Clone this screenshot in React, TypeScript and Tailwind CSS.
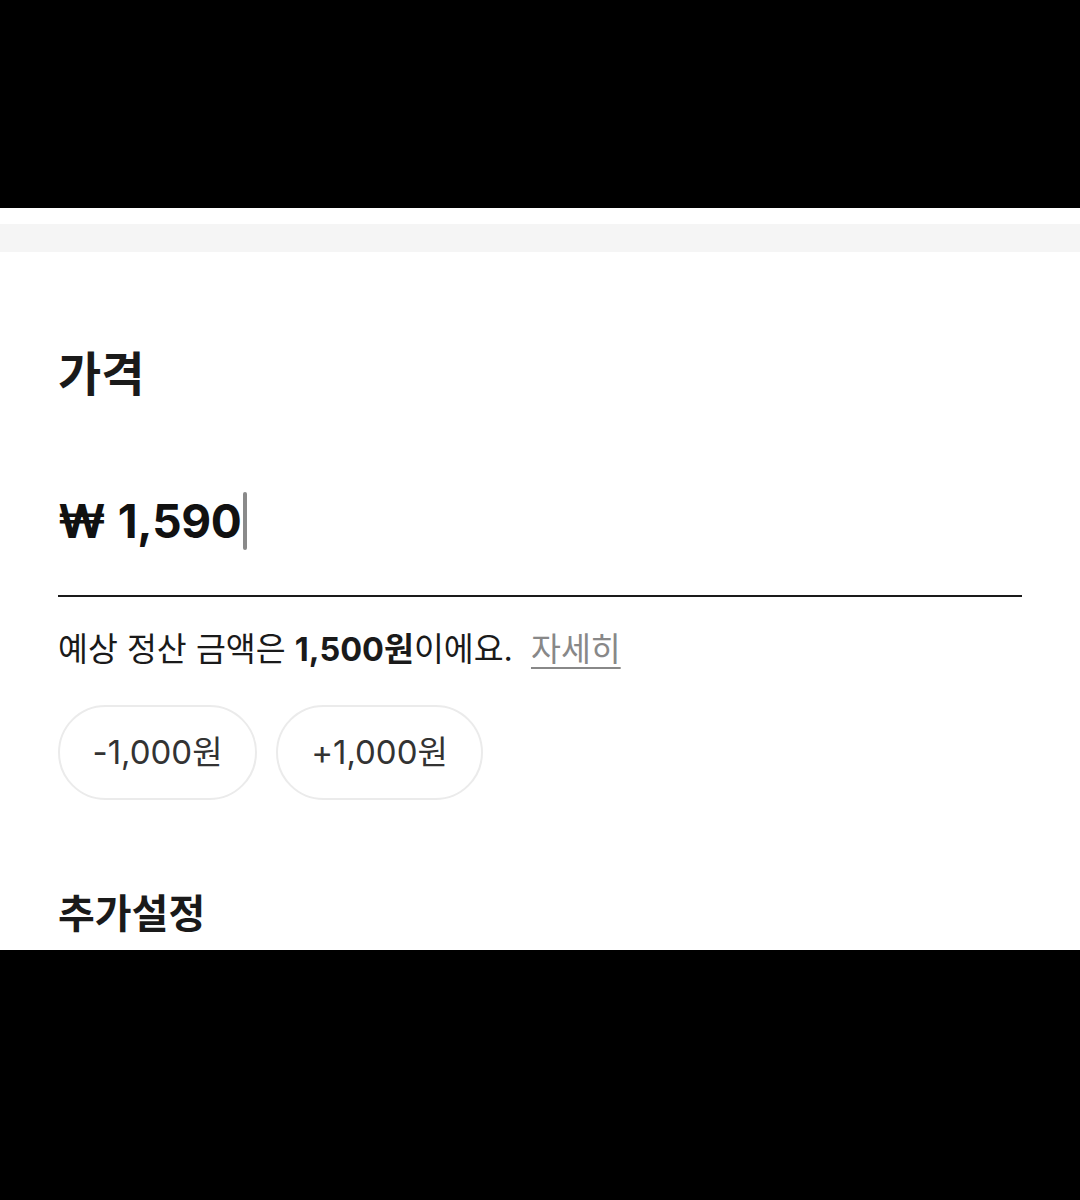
export default function App() {
  return (
    <div className="w-[1080px] h-[1200px] bg-black flex flex-col" style={{ fontFamily: 'Inter, "Noto Sans CJK KR", "Noto Sans", sans-serif' }}>
      <div className="h-[208px] shrink-0" />
      <div className="h-[742px] bg-white flex flex-col overflow-hidden">
        <div className="h-[16px] shrink-0" />
        <div className="h-[28px] bg-[#f5f5f5] shrink-0" />
        <div className="px-[58px] flex flex-col">
          <h2 className="mt-[90px] text-[47px] leading-[64px] font-bold text-[#1a1a1a]">가격</h2>
          <div className="mt-[85px] flex items-center h-[60px]">
            <span className="text-[46px] font-bold text-[#111] leading-none">₩</span>
            <span className="ml-[12px] text-[46px] font-bold text-[#111] leading-none tracking-[-0.3px]">1,590</span>
            <span className="w-[4px] h-[58px] bg-[#8a8a8a] rounded-full ml-[1px]" />
          </div>
          <div className="mt-[44px] h-[2px] bg-[#1a1a1a] w-[964px]" />
          <p className="mt-[33px] text-[32.5px] leading-[40px] text-[#1a1a1a] flex items-center">
            <span>예상 정산 금액은 <b className="font-bold">1,500원</b>이에요.</span>
            <span className="ml-[18px] text-[#888] underline underline-offset-[6px] decoration-[2px]">자세히</span>
          </p>
          <div className="mt-[35px] flex gap-[19px]">
            <button className="w-[199px] h-[95px] rounded-full border-2 border-[#ebebeb] text-[33px] text-[#333]">-1,000원</button>
            <button className="w-[207px] h-[95px] rounded-full border-2 border-[#ebebeb] text-[33px] text-[#333]">+1,000원</button>
          </div>
          <h3 className="mt-[89px] text-[40px] leading-[50px] font-bold text-[#1a1a1a]">추가설정</h3>
        </div>
      </div>
      <div className="flex-1" />
    </div>
  );
}
